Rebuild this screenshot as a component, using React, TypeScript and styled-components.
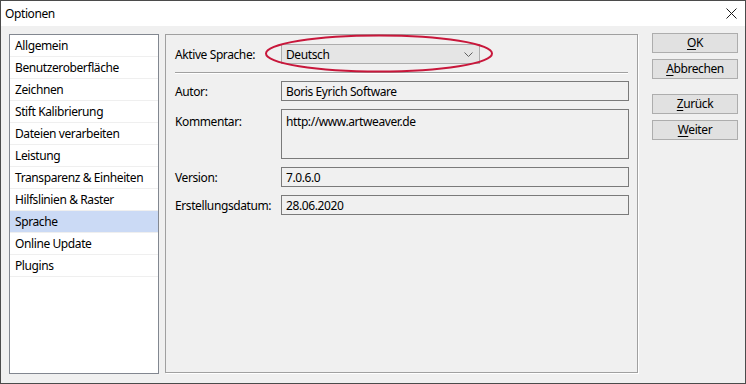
import { createGlobalStyle } from 'styled-components'
import styled from 'styled-components'

const GlobalStyle = createGlobalStyle`
  html, body {
    margin: 0;
    padding: 0;
    background: #ffffff;
  }
  body {
    font-family: 'Noto Sans', 'Open Sans', sans-serif;
    font-size: 12px;
    letter-spacing: -0.4px;
    color: #000;
  }
`

const Window = styled.div`
  position: relative;
  box-sizing: border-box;
  width: 746px;
  height: 384px;
  border: 1px solid #4b4b4b;
  background: #f0f0f0;
  display: flex;
  flex-direction: column;
`

const TitleBar = styled.div`
  height: 25px;
  background: #ffffff;
  display: flex;
  align-items: center;
  justify-content: space-between;
  padding: 0 8px 0 4px;
  flex-shrink: 0;
`

const Title = styled.span`
  font-size: 12px;
  line-height: 1;
`

const Body = styled.div`
  flex: 1;
  display: flex;
  padding: 8px 7px 9px 8px;
  min-height: 0;
`

const List = styled.ul`
  box-sizing: border-box;
  width: 150px;
  margin: 0;
  padding: 0;
  list-style: none;
  background: #ffffff;
  border: 1px solid #828790;
`

const Item = styled.li<{ $selected?: boolean }>`
  box-sizing: border-box;
  height: 22px;
  padding: 0 5px;
  display: flex;
  align-items: center;
  border-bottom: 1px solid #efefef;
  background: ${(p) => (p.$selected ? '#cbdaf5' : 'transparent')};
  white-space: nowrap;
`

const Panel = styled.div`
  position: relative;
  box-sizing: border-box;
  width: 473px;
  height: 339px;
  margin-left: 6px;
  border: 1px solid #a0a0a0;
  box-shadow: 1px 1px 0 #ffffff;
  padding: 9px 9px 0 9px;
`

const Row = styled.div<{ $top?: boolean }>`
  display: grid;
  grid-template-columns: 106px 1fr;
  align-items: ${(p) => (p.$top ? 'start' : 'center')};
`

const Label = styled.span<{ $pad?: boolean }>`
  white-space: nowrap;
  padding-top: ${(p) => (p.$pad ? '4px' : '0')};
`

const Combo = styled.div`
  box-sizing: border-box;
  width: 199px;
  height: 20px;
  border: 1px solid #adadad;
  background: #e5e5e5;
  display: flex;
  align-items: center;
  justify-content: space-between;
  padding: 0 6px 0 4px;
`

const Separator = styled.div`
  height: 1px;
  margin: 8px 0 8px 0;
  background: #a0a0a0;
  box-shadow: 0 1px 0 #ffffff;
`

const Fields = styled.div`
  display: flex;
  flex-direction: column;
  gap: 8px;
`

const Field = styled.div<{ $tall?: boolean }>`
  box-sizing: border-box;
  height: ${(p) => (p.$tall ? '50px' : '20px')};
  margin-right: -1px;
  border: 1px solid #7a7a7a;
  background: #f0f0f0;
  padding: ${(p) => (p.$tall ? '3px 4px' : '0 4px')};
  display: flex;
  align-items: ${(p) => (p.$tall ? 'flex-start' : 'center')};
`

const Highlight = styled.svg`
  position: absolute;
  left: 98px;
  top: -1px;
  overflow: visible;
`

const Buttons = styled.div`
  display: flex;
  flex-direction: column;
  margin-left: 14px;
  margin-top: -1px;
  width: 86px;
`

const Button = styled.button<{ $gap?: number }>`
  box-sizing: border-box;
  height: 20px;
  margin-top: ${(p) => p.$gap ?? 0}px;
  border: 1px solid #adadad;
  background: #e1e1e1;
  font-family: inherit;
  font-size: 12px;
  letter-spacing: inherit;
  color: #000;
  padding: 0;
  line-height: 1;

  u {
    text-decoration-thickness: 1px;
    text-underline-offset: 2px;
  }
`

const items = [
  'Allgemein',
  'Benutzeroberfläche',
  'Zeichnen',
  'Stift Kalibrierung',
  'Dateien verarbeiten',
  'Leistung',
  'Transparenz & Einheiten',
  'Hilfslinien & Raster',
  'Sprache',
  'Online Update',
  'Plugins',
]

export default function App() {
  return (
    <>
      <GlobalStyle />
      <Window>
        <TitleBar>
          <Title>Optionen</Title>
          <svg width="11" height="11" viewBox="0 0 11 11">
            <path d="M0.5 0.5 L10.5 10.5 M10.5 0.5 L0.5 10.5" stroke="#1a1a1a" strokeWidth="1" />
          </svg>
        </TitleBar>
        <Body>
          <List>
            {items.map((name) => (
              <Item key={name} $selected={name === 'Sprache'}>{name}</Item>
            ))}
          </List>
          <Panel>
            <Row>
              <Label>Aktive Sprache:</Label>
              <Combo>
                <span>Deutsch</span>
                <svg width="9" height="5" viewBox="0 0 9 5">
                  <path d="M0.5 0.5 L4.5 4.5 L8.5 0.5" fill="none" stroke="#606060" strokeWidth="1" />
                </svg>
              </Combo>
            </Row>
            <Separator />
            <Fields>
              <Row>
                <Label>Autor:</Label>
                <Field>Boris Eyrich Software</Field>
              </Row>
              <Row $top>
                <Label $pad>Kommentar:</Label>
                <Field $tall>http://www.artweaver.de</Field>
              </Row>
              <Row>
                <Label>Version:</Label>
                <Field>7.0.6.0</Field>
              </Row>
              <Row>
                <Label>Erstellungsdatum:</Label>
                <Field>28.06.2020</Field>
              </Row>
            </Fields>
            <Highlight width="230" height="40" viewBox="0 0 230 40">
              <ellipse cx="115" cy="19.5" rx="113" ry="18" fill="none" stroke="#c8173b" strokeWidth="2" />
            </Highlight>
          </Panel>
          <Buttons>
            <Button><u>O</u>K</Button>
            <Button $gap={6}><u>A</u>bbrechen</Button>
            <Button $gap={15}><u>Z</u>urück</Button>
            <Button $gap={6}><u>W</u>eiter</Button>
          </Buttons>
        </Body>
      </Window>
    </>
  )
}
